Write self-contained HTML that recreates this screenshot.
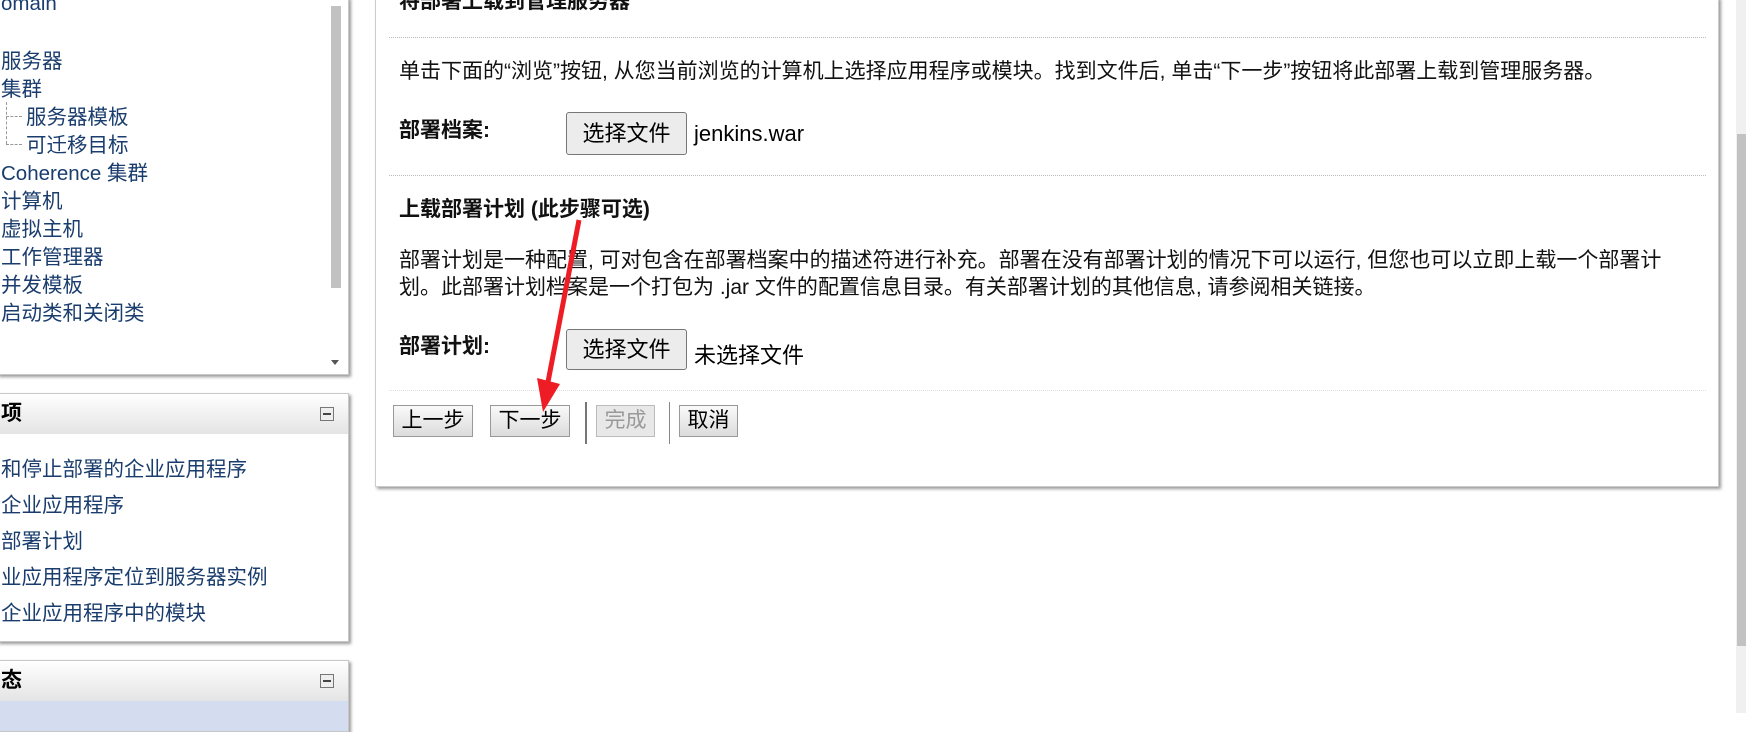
<!DOCTYPE html>
<html><head><meta charset="utf-8"><style>
body{margin:0;width:1746px;height:713px;overflow:hidden;background:#fff;font-family:"Liberation Sans","Noto Sans CJK SC",sans-serif;position:relative}
.a{position:absolute;white-space:nowrap}
.box{position:absolute;background:#fff;border:1px solid #c8c8c8;box-shadow:2px 2px 3px #999}
.lk{color:#1a3d6e;font-size:20.5px;position:absolute;white-space:nowrap}
.hd{position:absolute;left:0;right:0;top:0;background:linear-gradient(#fff,#e4e4e4);font-weight:bold;font-size:21px}
.mn{position:absolute;width:12px;height:12px;border:1px solid #777;background:#eee}
.mn:after{content:"";position:absolute;left:2px;right:2px;top:5px;height:2px;background:#444}
.dot{position:absolute;left:389px;width:1317px;border-top:1px dotted #bbb}
.t{font-size:21px;color:#111}
.fb{position:absolute;border:1px solid #777;border-radius:3px;background:#ececec;font-size:22px;text-align:center;box-sizing:border-box}
.bt{position:absolute;border:1px solid #999;background:linear-gradient(#fafafa,#dcdcdc);font-size:21px;text-align:center;box-sizing:border-box;line-height:30px}
</style></head><body>
<div class="box" style="left:-3px;top:-3px;width:350px;height:376px">
<div class="lk" style="left:3px;top:-6px">omain</div>
<div class="lk" style="left:3px;top:46px">服务器</div>
<div class="lk" style="left:3px;top:74px">集群</div>
<div class="a" style="left:8px;top:104px;width:16px;height:42px;border-left:1px dashed #999"></div>
<div class="a" style="left:8px;top:118px;width:16px;border-top:1px dashed #999"></div>
<div class="a" style="left:8px;top:146px;width:16px;border-top:1px dashed #999"></div>
<div class="lk" style="left:28px;top:102px">服务器模板</div>
<div class="lk" style="left:28px;top:130px">可迁移目标</div>
<div class="lk" style="left:3px;top:158px">Coherence 集群</div>
<div class="lk" style="left:3px;top:186px">计算机</div>
<div class="lk" style="left:3px;top:214px">虚拟主机</div>
<div class="lk" style="left:3px;top:242px">工作管理器</div>
<div class="lk" style="left:3px;top:270px">并发模板</div>
<div class="lk" style="left:3px;top:298px">启动类和关闭类</div>
<div class="a" style="left:333px;top:8px;width:10px;height:282px;background:#c2c2c2"></div>
<div class="a" style="left:333px;top:362px;border:4px solid transparent;border-top:5px solid #555"></div>
</div>
<div class="box" style="left:-3px;top:393px;width:350px;height:247px">
<div class="hd" style="height:40px;line-height:40px;padding-left:3px">项</div>
<div class="mn" style="left:322px;top:13px"></div>
<div class="lk" style="left:3px;top:58px">和停止部署的企业应用程序</div>
<div class="lk" style="left:3px;top:94px">企业应用程序</div>
<div class="lk" style="left:3px;top:130px">部署计划</div>
<div class="lk" style="left:3px;top:166px">业应用程序定位到服务器实例</div>
<div class="lk" style="left:3px;top:202px">企业应用程序中的模块</div>
</div>
<div class="box" style="left:-3px;top:660px;width:350px;height:70px">
<div class="hd" style="height:40px;line-height:40px;padding-left:3px">态</div>
<div class="mn" style="left:322px;top:13px"></div>
<div class="a" style="left:0;right:0;top:40px;height:30px;background:#d3ddef"></div>
</div>
<div class="box" style="left:375px;top:-3px;width:1342px;height:488px;border-color:#ccc"></div>
<div class="a t" style="left:399px;top:-15px;font-weight:bold">将部署上载到管理服务器</div>
<div class="dot" style="top:37px"></div>
<div class="a t" style="left:399px;top:55px">单击下面的“浏览”按钮, 从您当前浏览的计算机上选择应用程序或模块。找到文件后, 单击“下一步”按钮将此部署上载到管理服务器。</div>
<div class="a t" style="left:399px;top:114px;font-weight:bold">部署档案:</div>
<div class="fb" style="left:566px;top:112px;width:121px;height:43px;line-height:41px">选择文件</div>
<div class="a" style="left:694px;top:121px;font-size:22px">jenkins.war</div>
<div class="dot" style="top:175px"></div>
<div class="a t" style="left:399px;top:193px;font-weight:bold">上载部署计划 (此步骤可选)</div>
<div class="a t" style="left:399px;top:244px">部署计划是一种配置, 可对包含在部署档案中的描述符进行补充。部署在没有部署计划的情况下可以运行, 但您也可以立即上载一个部署计</div>
<div class="a t" style="left:399px;top:271px">划。此部署计划档案是一个打包为 .jar 文件的配置信息目录。有关部署计划的其他信息, 请参阅相关链接。</div>
<div class="a t" style="left:399px;top:330px;font-weight:bold">部署计划:</div>
<div class="fb" style="left:566px;top:329px;width:121px;height:41px;line-height:39px">选择文件</div>
<div class="a" style="left:694px;top:338px;font-size:22px">未选择文件</div>
<div class="dot" style="top:390px;border-color:#ddd"></div>
<div class="bt" style="left:393px;top:405px;width:80px;height:32px">上一步</div>
<div class="bt" style="left:490px;top:405px;width:80px;height:32px">下一步</div>
<div class="a" style="left:585px;top:402px;width:2px;height:42px;background:#777"></div>
<div class="bt" style="left:596px;top:405px;width:59px;height:32px;color:#999;border-color:#bbb;background:#e8e8e8">完成</div>
<div class="a" style="left:669px;top:402px;width:1px;height:42px;background:#888"></div>
<div class="bt" style="left:679px;top:405px;width:59px;height:32px">取消</div>
<svg class="a" style="left:0;top:0" width="1746" height="713"><line x1="579" y1="220" x2="548" y2="382" stroke="#ee1c25" stroke-width="5"/><polygon points="537,378 560,384 543,412" fill="#ee1c25"/></svg>
<div class="a" style="left:1736px;top:0;width:10px;height:713px;background:#f0f0f0"></div>
<div class="a" style="left:1737px;top:134px;width:9px;height:512px;background:#c2c2c2"></div>
</body></html>
